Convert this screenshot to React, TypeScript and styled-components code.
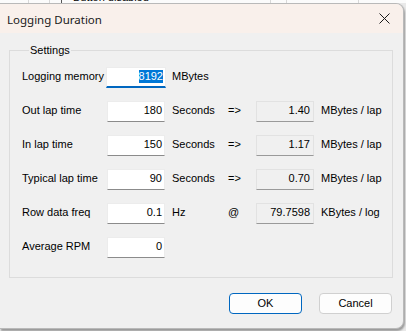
import React from "react";
import styled, { createGlobalStyle } from "styled-components";

const Global = createGlobalStyle`
  html, body { margin: 0; padding: 0; }
  body {
    background: #e9e9e9;
    width: 406px;
    height: 331px;
    overflow: hidden;
    font-family: "Liberation Sans", Arial, sans-serif;
  }
`;

const Page = styled.div`
  display: flex;
  flex-direction: column;
  width: 406px;
  height: 331px;
`;

const BackStrip = styled.div`
  display: flex;
  height: 3px;
  background: #fbfbfb;
  overflow: hidden;
`;

const BackCell = styled.div<{ $w: number; $dark?: boolean }>`
  width: ${(p) => p.$w}px;
  flex: none;
  height: 3px;
  border-right: 1px solid ${(p) => (p.$dark ? "#555" : "#d8d8d8")};
  box-sizing: border-box;
  display: flex;
  align-items: flex-end;
  overflow: hidden;
  font-size: 11px;
  line-height: 11px;
  color: #000;
  padding-left: 11px;
`;

const Win = styled.div`
  width: 404px;
  height: 326px;
  display: flex;
  flex-direction: column;
  background: #f0f0f0;
  border: 1px solid #b9b9b9;
  border-left: none;
  border-radius: 0 8px 8px 0;
  box-sizing: border-box;
  overflow: hidden;
  box-shadow: 1px 2px 2px rgba(0, 0, 0, 0.35);
`;

const TitleBar = styled.div`
  height: 29px;
  flex: none;
  display: flex;
  align-items: center;
  justify-content: space-between;
  background: #f9f0eb;
  padding: 0 13px 0 7px;
`;

const Title = styled.span`
  font-family: "Noto Sans", "Segoe UI", sans-serif;
  font-size: 11.5px;
  color: #1a1a1a;
  margin-top: 1px;
`;

const CloseIcon = () => (
  <svg width="11" height="11" viewBox="0 0 11 11">
    <path d="M0.5 0.5 L10.5 10.5 M10.5 0.5 L0.5 10.5" stroke="#1a1a1a" strokeWidth="1" />
  </svg>
);

const Body = styled.div`
  flex: 1;
  display: flex;
  flex-direction: column;
  padding: 11px 10px 0 9px;
`;

const Group = styled.fieldset`
  margin: 0;
  border: 1px solid #dcdcdc;
  padding: 10px 0 16px 12px;
  height: 234px;
  box-sizing: border-box;
`;

const Legend = styled.legend`
  font-size: 11px;
  line-height: 13px;
  padding: 0 1px;
  margin-left: 7px;
  color: #000;
`;

const Grid = styled.div`
  display: grid;
  grid-template-columns: 85px 58px 63px 28px 58px auto;
  grid-auto-rows: 21px;
  row-gap: 13px;
  align-items: center;
  font-size: 11px;
  color: #000;
`;

const Label = styled.span`
  line-height: 13px;
  margin-top: -2px;
`;

const Unit = styled.span`
  padding-left: 7px;
  line-height: 13px;
  margin-top: -2px;
  white-space: nowrap;
`;

const Arrow = styled.span`
  line-height: 13px;
  margin-top: -2px;
`;

const Field = styled.div<{ $focus?: boolean }>`
  height: 21px;
  box-sizing: border-box;
  background: #fff;
  border: 1px solid #ececec;
  border-bottom: ${(p) => (p.$focus ? "2px solid #0067c0" : "1px solid #8b8b8b")};
  margin: ${(p) => (p.$focus ? "0 -1px 0 -1px" : "0")};
  display: flex;
  align-items: flex-start;
  justify-content: flex-end;
  padding: 2px 2px 0 0;
  line-height: 13px;
`;

const ReadBox = styled.div`
  height: 21px;
  box-sizing: border-box;
  background: #f0f0f0;
  border: 1px solid #e2e2e2;
  border-bottom: 1px solid #9a9a9a;
  display: flex;
  align-items: flex-start;
  justify-content: flex-end;
  padding: 2px 3px 0 0;
  line-height: 13px;
`;

const Selected = styled.span`
  background: #0078d7;
  color: #fff;
`;

const Empty = styled.span``;

const Buttons = styled.div`
  display: flex;
  justify-content: flex-end;
  gap: 17px;
  padding: 15px 1px 0 0;
`;

const Button = styled.button<{ $primary?: boolean }>`
  width: 73px;
  height: 21px;
  box-sizing: border-box;
  border-radius: 4px;
  background: #fdfdfd;
  border: 1px solid ${(p) => (p.$primary ? "#0067c0" : "#d0d0d0")};
  font-family: "Liberation Sans", Arial, sans-serif;
  font-size: 11px;
  color: #000;
  padding: 0;
  line-height: 13px;
`;

type Row = {
  label: string;
  value: string;
  unit: string;
  focus?: boolean;
  arrow?: string;
  result?: string;
  resultUnit?: string;
};

const rows: Row[] = [
  { label: "Logging memory", value: "8192", unit: "MBytes", focus: true },
  { label: "Out lap time", value: "180", unit: "Seconds", arrow: "=>", result: "1.40", resultUnit: "MBytes / lap" },
  { label: "In lap time", value: "150", unit: "Seconds", arrow: "=>", result: "1.17", resultUnit: "MBytes / lap" },
  { label: "Typical lap time", value: "90", unit: "Seconds", arrow: "=>", result: "0.70", resultUnit: "MBytes / lap" },
  { label: "Row data freq", value: "0.1", unit: "Hz", arrow: "@", result: "79.7598", resultUnit: "KBytes / log" },
  { label: "Average RPM", value: "0", unit: "" },
];

export default function App() {
  return (
    <>
      <Global />
      <Page>
        <BackStrip>
          <BackCell $w={29} />
          <BackCell $w={21} />
          <BackCell $w={9} $dark />
          <BackCell $w={209}>Button disabled</BackCell>
          <BackCell $w={16} />
          <BackCell $w={72} />
          <BackCell $w={50} />
        </BackStrip>
        <Win>
          <TitleBar>
            <Title>Logging Duration</Title>
            <CloseIcon />
          </TitleBar>
          <Body>
            <Group>
              <Legend>Settings</Legend>
              <Grid>
                {rows.map((r) => (
                  <React.Fragment key={r.label}>
                    <Label>{r.label}</Label>
                    <Field $focus={r.focus}>
                      {r.focus ? <Selected>{r.value}</Selected> : r.value}
                    </Field>
                    <Unit>{r.unit}</Unit>
                    <Arrow>{r.arrow ?? ""}</Arrow>
                    {r.result ? <ReadBox>{r.result}</ReadBox> : <Empty />}
                    <Unit>{r.resultUnit ?? ""}</Unit>
                  </React.Fragment>
                ))}
              </Grid>
            </Group>
            <Buttons>
              <Button $primary>OK</Button>
              <Button>Cancel</Button>
            </Buttons>
          </Body>
        </Win>
      </Page>
    </>
  );
}
